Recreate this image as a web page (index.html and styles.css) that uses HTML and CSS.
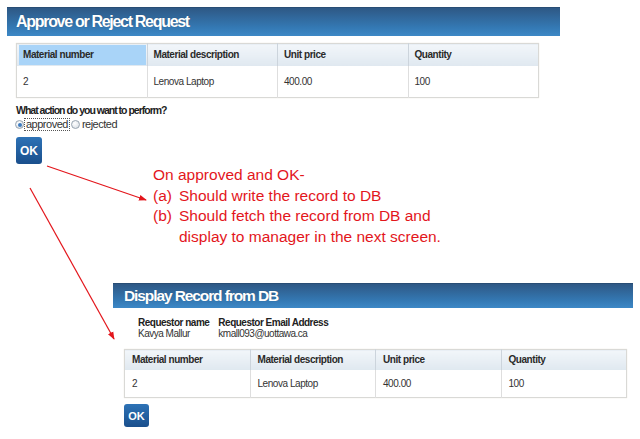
FILE: index.html
```html
<!DOCTYPE html>
<html>
<head>
<meta charset="utf-8">
<link rel="stylesheet" href="styles.css">
</head>
<body>
<div class="page">
  <section class="screen screen-one">
    <div class="bar"><h1 class="bar-title">Approve or Reject Request</h1></div>
    <table class="grid grid-one">
      <thead>
        <tr><th><span class="hl">Material number</span></th><th>Material description</th><th>Unit price</th><th>Quantity</th></tr>
      </thead>
      <tbody>
        <tr><td>2</td><td>Lenova Laptop</td><td>400.00</td><td>100</td></tr>
      </tbody>
    </table>
    <p class="question">What action do you want to perform?</p>
    <div class="radios">
      <span class="radio checked"></span><span class="rlabel focus">approved</span>
      <span class="radio"></span><span class="rlabel">rejected</span>
    </div>
    <button class="ok ok-one">OK</button>
  </section>

  <div class="note">
    <div class="note-line">On approved and OK-</div>
    <div class="note-item"><span class="tag">(a)</span><span>Should write the record to DB</span></div>
    <div class="note-item"><span class="tag">(b)</span><span>Should fetch the record from DB and<br>display to manager in the next screen.</span></div>
  </div>

  <section class="screen screen-two">
    <div class="bar bar-two"><h1 class="bar-title">Display Record from DB</h1></div>
    <div class="requestor">
      <div class="req-col"><div class="req-label">Requestor name</div><div class="req-value">Kavya Mallur</div></div>
      <div class="req-col"><div class="req-label">Requestor Email Address</div><div class="req-value">kmall093@uottawa.ca</div></div>
    </div>
    <table class="grid grid-two">
      <thead>
        <tr><th>Material number</th><th>Material description</th><th>Unit price</th><th>Quantity</th></tr>
      </thead>
      <tbody>
        <tr><td>2</td><td>Lenova Laptop</td><td>400.00</td><td>100</td></tr>
      </tbody>
    </table>
    <button class="ok ok-two">OK</button>
  </section>

  <svg class="arrows" width="640" height="439" viewBox="0 0 640 439">
    <defs>
      <marker id="head" markerWidth="8" markerHeight="8" refX="7" refY="4" orient="auto" markerUnits="userSpaceOnUse">
        <path d="M0,1 L8,4 L0,7 Z" fill="#e3161c"/>
      </marker>
    </defs>
    <line x1="47" y1="159" x2="146" y2="193" stroke="#e3161c" stroke-width="1.2" marker-end="url(#head)"/>
    <line x1="30" y1="181" x2="114" y2="332" stroke="#e3161c" stroke-width="1.2" marker-end="url(#head)"/>
  </svg>
</div>
</body>
</html>
```

FILE: styles.css
```css
* { box-sizing: border-box; }
html, body { margin: 0; padding: 0; background: #fff; }
body { font-family: "Liberation Sans", Arial, sans-serif; color: #222; width: 640px; height: 439px; overflow: hidden; }
.page { position: relative; width: 640px; height: 439px; }

.screen-one { margin: 7px 0 0 7px; width: 553px; }
.bar {
  height: 29px;
  background: linear-gradient(#2e5885, #3479b4 70%, #3d88c6);
  border-top: 1px solid #284d75;
  display: flex;
  align-items: center;
  padding-left: 9px;
}
.bar-title {
  margin: 0;
  font-size: 16px;
  font-weight: bold;
  color: #fff;
  letter-spacing: -1.3px;
  text-shadow: 0 0 1px rgba(0,0,0,0.3);
}

.grid {
  border-collapse: collapse;
  table-layout: fixed;
  border: 1px solid #d9d9d6;
  box-shadow: 0 0 1px #e8e2d6;
  font-size: 10px;
  letter-spacing: -0.45px;
}
.grid th {
  text-align: left;
  font-weight: bold;
  color: #2a2a2a;
  background: linear-gradient(#f2f6fa, #dfe8f0);
  border-right: 1px solid #ccd4dc;
  padding: 0 6px;
}
.grid td {
  color: #333;
  background: #fff;
  border-right: 1px solid #dedede;
  padding: 0 6px;
}
.grid th:last-child, .grid td:last-child { border-right: none; }

.grid-one { margin: 7px 0 0 9px; width: 523px; }
.grid-one th { height: 22px; }
.grid-one td { height: 32px; }
.grid-one th:first-child { padding: 0 1px 0 2px; }
.hl { display: flex; align-items: center; height: 20px; background: #a9d4f8; padding-left: 4px; }

.question { margin: 6px 0 0 9px; font-size: 10.5px; font-weight: bold; letter-spacing: -1px; color: #222; }
.radios { display: flex; align-items: center; margin: 2px 0 0 8px; height: 13px; font-size: 11px; letter-spacing: -0.5px; color: #333; }
.radio {
  width: 9px; height: 9px; border-radius: 50%;
  border: 1px solid #98a4b0;
  background: radial-gradient(circle at 40% 35%, #ffffff, #d4dbe2);
  display: inline-flex; align-items: center; justify-content: center;
}
.radio.checked::after { content: ""; width: 4px; height: 4px; border-radius: 50%; background: #3f7cc0; }
.rlabel { margin-left: 1px; margin-right: 2px; padding: 0 1px; line-height: 11px; }
.rlabel.focus { outline: 1px dotted #555; }

.ok {
  display: flex; align-items: center; justify-content: center;
  border: none; border-radius: 3px;
  background: linear-gradient(#2d72b6, #1a4f8c);
  color: #fff; font-family: "Liberation Sans", Arial, sans-serif;
  font-weight: bold; font-size: 12px; padding: 0;
}
.ok-one { width: 26px; height: 27px; margin: 6px 0 0 9px; }

.note {
  margin: 1px 0 0 153px;
  color: #e3161c;
  font-size: 15.5px;
  line-height: 20.5px;
}
.note-item { display: flex; }
.tag { width: 26px; flex: none; }

.screen-two { margin: 36px 0 0 113px; width: 520px; }
.bar-two { height: 25px; padding-left: 11px; }
.bar-two .bar-title { font-size: 15.5px; letter-spacing: -1.1px; }

.requestor { display: flex; gap: 9px; margin: 9px 0 0 25px; font-size: 10px; letter-spacing: -0.5px; }
.req-label { font-weight: bold; color: #222; line-height: 11px; }
.req-value { color: #333; line-height: 11px; }

.grid-two { margin: 10px 0 0 11px; width: 503px; }
.grid-two th { height: 20px; padding: 0 7px; }
.grid-two td { height: 28px; padding: 0 7px; }

.ok-two { width: 25px; height: 23px; margin: 6px 0 0 11px; font-size: 11px; }

.arrows { position: absolute; left: 0; top: 0; pointer-events: none; }
```
